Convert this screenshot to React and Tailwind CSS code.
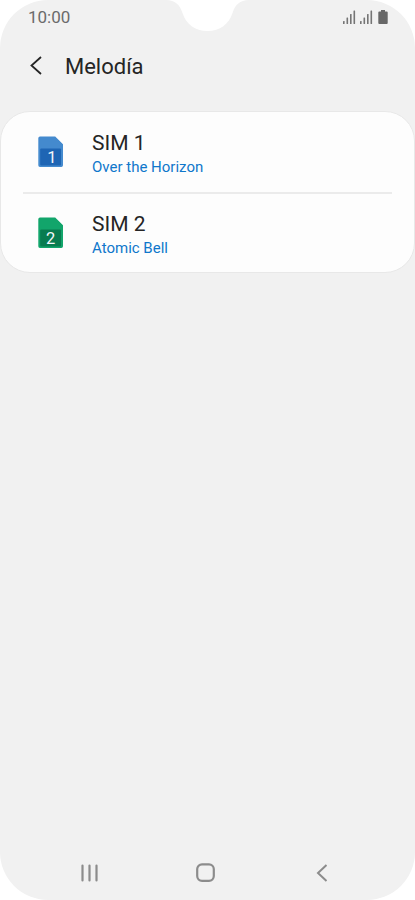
const sims = [
  { id: 1, title: "SIM 1", tone: "Over the Horizon", body: "#448ace", chip: "#1e65b4" },
  { id: 2, title: "SIM 2", tone: "Atomic Bell", body: "#12a56b", chip: "#087c50" },
];

const SignalIcon = () => (
  <svg width="13" height="14" viewBox="0 0 13 14" fill="#757575">
    <rect x="0" y="11" width="1.6" height="3" rx="0.5" />
    <rect x="3.5" y="7.5" width="1.6" height="6.5" rx="0.5" />
    <rect x="7" y="4" width="1.6" height="10" rx="0.5" />
    <rect x="10.5" y="0.5" width="1.6" height="13.5" rx="0.5" />
  </svg>
);

const BatteryIcon = () => (
  <svg width="10" height="14" viewBox="0 0 10 14" fill="#686868">
    <path d="M3 0h4v1.5h1.7a1 1 0 0 1 1 1V13a1 1 0 0 1-1 1H1.3a1 1 0 0 1-1-1V2.5a1 1 0 0 1 1-1H3z" />
  </svg>
);

const SimIcon = ({ sim }) => (
  <svg width="26" height="32" viewBox="0 0 26 32">
    <path
      d="M2 .5h15.2L25 8.3V29.3a1.7 1.7 0 0 1-1.7 1.7H2a1.7 1.7 0 0 1-1.7-1.7V2.2A1.7 1.7 0 0 1 2 .5z"
      fill={sim.body}
    />
    <rect x="2.2" y="12.5" width="20.8" height="17" rx="1" fill={sim.chip} />
    <text
      x={sim.id === 1 ? 13.8 : 12.6}
      y="26.8"
      textAnchor="middle"
      fill="#f2f7fb"
      fontSize="16.5"
      fontFamily="Roboto, sans-serif"
    >
      {sim.id}
    </text>
  </svg>
);

const StatusBar = () => (
  <div className="flex h-[34px] items-center justify-between pl-7 pr-[27px] text-[#6b6b6b]">
    <span className="text-[17px] leading-[34px]">10:00</span>
    <div className="flex items-center">
      <SignalIcon />
      <span className="w-1" />
      <SignalIcon />
      <span className="w-[5px]" />
      <BatteryIcon />
    </div>
    {/* Camera notch */}
    <svg className="absolute left-[166px] top-0" width="84" height="32" viewBox="0 0 84 32">
      <path
        d="M0 0C9 0 14 5 16.5 13C20 24 29 31 41.5 31C54 31 63 24 66.5 13C69 5 74 0 83 0z"
        fill="#fff"
      />
    </svg>
  </div>
);

const Header = () => (
  <div className="flex h-[77px] items-start pl-[30px] pt-[17px]">
    <svg className="mt-[5px]" width="12" height="19" viewBox="0 0 12 19" fill="none">
      <path d="M11 1L1.5 9.5L11 18" stroke="#252525" strokeWidth="1.8" />
    </svg>
    <h1 className="ml-[23px] mt-px text-[22px] leading-[30px] text-[#252525]">Melodía</h1>
  </div>
);

const NavBar = () => (
  <div className="mt-auto flex h-[54px] items-center pl-[81px]">
    <svg width="17" height="18" viewBox="0 0 17 18" stroke="#8c8c8c" strokeWidth="2.2" strokeLinecap="round">
      <path d="M1.5 1.5v15M8.5 1.5v15M15.5 1.5v15" />
    </svg>
    <svg className="ml-[98px]" width="19" height="20" viewBox="0 0 19 20" fill="none">
      <rect x="1.2" y="1.3" width="16.6" height="16.6" rx="4.8" stroke="#8c8c8c" strokeWidth="2.2" />
    </svg>
    <svg className="ml-[101px]" width="12" height="18" viewBox="0 0 12 18" fill="none">
      <path d="M10.5 1L2 9L10.5 17" stroke="#8c8c8c" strokeWidth="2" />
    </svg>
  </div>
);

const App = () => {
  return (
    <div className="h-[900px] w-[415px] bg-white font-['Roboto',sans-serif]">
      <div className="relative flex h-full flex-col overflow-hidden rounded-[48px] bg-[#f1f1f1]">
        <StatusBar />
        <Header />

        <div className="h-[162px] rounded-[30px] border border-[#e8e8e8] bg-[#fdfdfd] px-[22px]">
          {sims.map((sim, index) => (
            <div
              key={sim.id}
              className={
                index === 0
                  ? "flex h-[82px] border-b-2 border-[#ebebeb] pl-[15px] pt-6"
                  : "flex h-[78px] pl-[15px] pt-[23px]"
              }
            >
              <SimIcon sim={sim} />
              <div className="-mt-[5px] ml-7">
                <p className="text-[21px] leading-[24px] text-[#252525]">{sim.title}</p>
                <p className="text-[15px] leading-[24px] text-[#0f77cb]">{sim.tone}</p>
              </div>
            </div>
          ))}
        </div>

        <NavBar />
      </div>
    </div>
  );
};

export default App;
